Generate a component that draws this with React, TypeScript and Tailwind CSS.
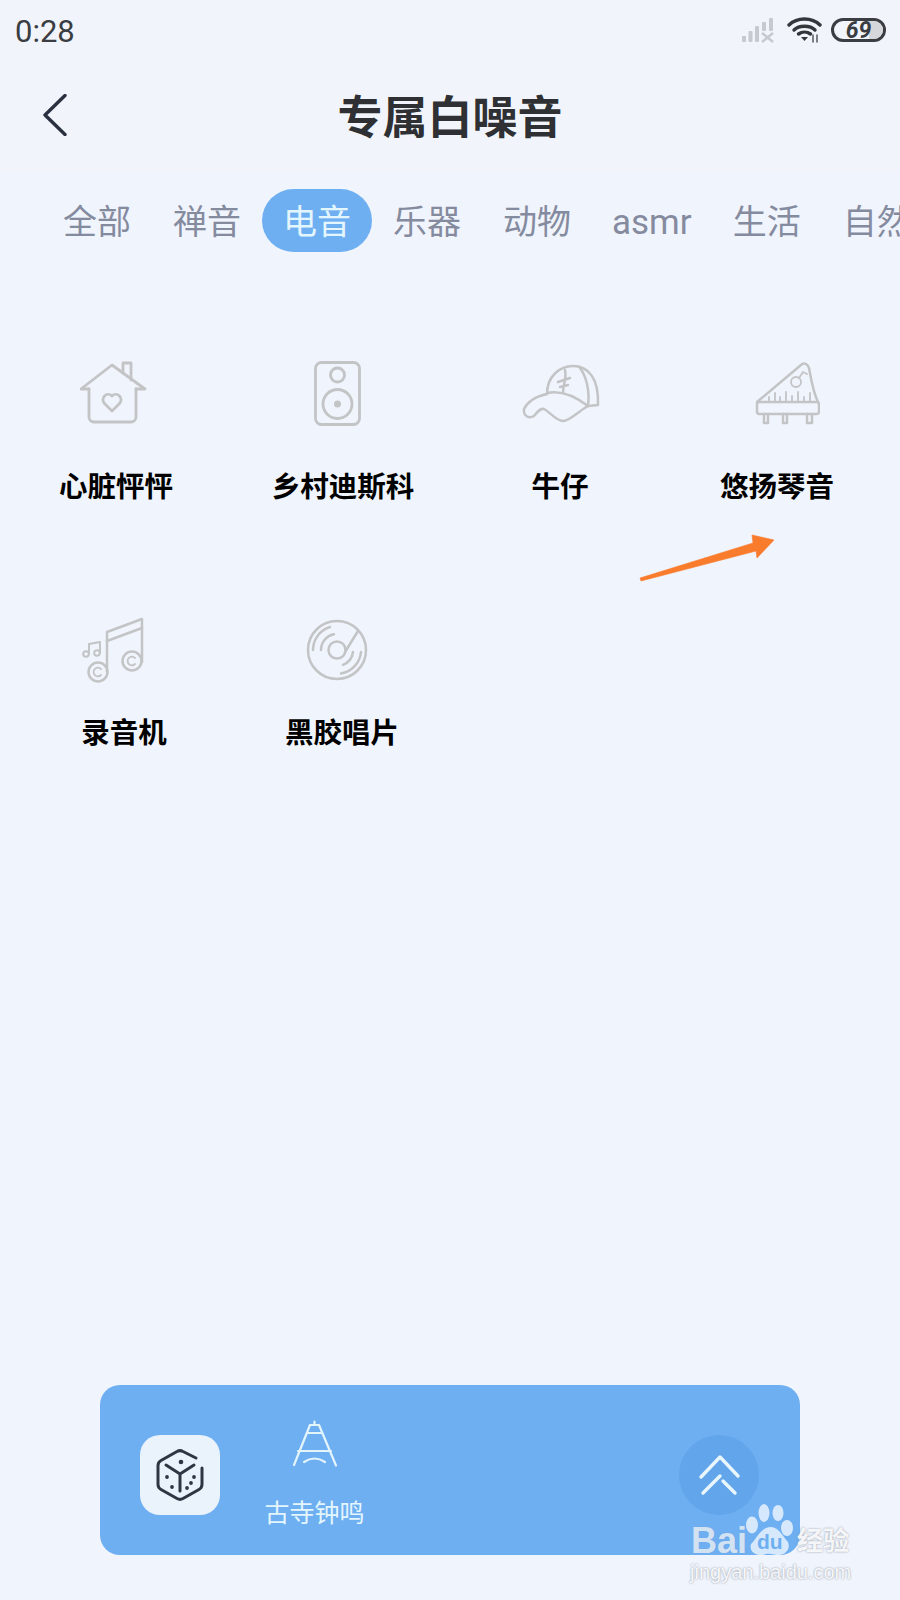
import React from 'react';

const CJK = 'font-["Roboto","Noto_Sans_CJK_SC",sans-serif]';

const tabs = ['全部', '禅音', '电音', '乐器', '动物', 'asmr', '生活', '自然'];

const HouseIcon = () => (
  <svg width="80" height="80" viewBox="0 0 80 80" fill="none" stroke="#c3c4c6" strokeWidth="2.800" strokeLinejoin="round" strokeLinecap="round">
    <path d="M1 35L32 11L65 35H56M1 35H9" />
    <path d="M43 19V9H51V26" />
    <path d="M9 35V63a5 5 0 0 0 5 5H51a5 5 0 0 0 5-5V35" />
    <path d="M32 57L24.500 49.500a5.300 5.300 0 0 1 7.500-7.500a5.300 5.300 0 0 1 7.500 7.500Z" />
  </svg>
);

const SpeakerIcon = () => (
  <svg width="80" height="80" viewBox="0 0 80 80" fill="none" stroke="#c3c4c6" strokeWidth="2.800">
    <rect x="15.500" y="8.500" width="44" height="62" rx="6" />
    <circle cx="37.500" cy="21" r="7" />
    <circle cx="37.500" cy="50" r="14.500" />
    <circle cx="37.500" cy="50" r="3.500" fill="#c3c4c6" stroke="none" />
  </svg>
);

const CapIcon = () => (
  <svg width="80" height="80" viewBox="0 0 80 80" fill="none" stroke="#c3c4c6" strokeWidth="2.500" strokeLinecap="round" strokeLinejoin="round">
    <path d="M27 40C27 22 40 12 53 12C68 12 79 24 78 51L68 52" />
    <path d="M27 40C18 42 8 47 4 55C3 62 9 65 14 62C17 58 20 54 24 55C30 58 36 67 43 67C50 67 60 56 68 52" />
    <path d="M27 39C40 36 55 42 68 52" />
    <path d="M60 14C66 22 70 36 68 52" />
    <path d="M45 16C47 24 43 30 43 39M38 28L50 24M40 33L48 31" />
  </svg>
);

const PianoIcon = () => (
  <svg width="80" height="80" viewBox="0 0 80 80" fill="none" stroke="#c3c4c6" strokeWidth="2.500" strokeLinecap="round" strokeLinejoin="round">
    <path d="M17 48L61 11C64 8 68 10 69 14C71 25 73 38 78 48" />
    <rect x="17" y="48" width="62" height="12" rx="2.500" />
    <path d="M24 60V69H28V60M43 60V69H47V60M67 60V69H72V60" />
    <path d="M29 48V43M35 48V39M40 48V43M46 48V38M52 48V42M58 48V38M64 48V43M70 48V39" strokeWidth="1.800" />
    <circle cx="56" cy="28" r="5" strokeWidth="1.800" />
    <path d="M59 24L63 18L67 20" strokeWidth="1.800" />
  </svg>
);

const NotesIcon = () => (
  <svg width="80" height="80" viewBox="0 0 80 80" fill="none" stroke="#c3c4c6" strokeWidth="2.500" strokeLinecap="round" strokeLinejoin="round">
    <path d="M27 62V22L62 9V52" />
    <path d="M27 31L62 18" />
    <circle cx="18" cy="62" r="9.500" />
    <path d="M21 59a4.300 4.300 0 1 0 0 6" strokeWidth="1.800" />
    <circle cx="52" cy="51" r="9.500" />
    <path d="M55 48a4.300 4.300 0 1 0 0 6" strokeWidth="1.800" />
    <circle cx="6" cy="44" r="2.800" strokeWidth="2" />
    <circle cx="17" cy="43" r="2.800" strokeWidth="2" />
    <path d="M9 44V34L20 32V43" strokeWidth="2" />
  </svg>
);

const RecordIcon = () => (
  <svg width="80" height="80" viewBox="0 0 80 80" fill="none" stroke="#c3c4c6" strokeWidth="2.500" strokeLinecap="round">
    <circle cx="37" cy="40" r="29" />
    <circle cx="37" cy="40" r="8.500" />
    <path d="M45 42L58 21" />
    <path d="M21 40a16 16 0 0 1 13-15.700" />
    <path d="M13 40a24 24 0 0 1 17-23" />
    <path d="M53 42a16 16 0 0 1-10 12.800" />
    <path d="M61 42a24 24 0 0 1-20 21.500" />
  </svg>
);

const DiceIcon = () => (
  <svg width="80" height="80" viewBox="0 0 80 80" fill="none" stroke="#2e3644" strokeWidth="3" strokeLinecap="round" strokeLinejoin="round">
    <path d="M56 23L43 16.500a6 6 0 0 0-6 0L21 25.500a6 6 0 0 0-3 5V49.500a6 6 0 0 0 3 5L37 63.500a6 6 0 0 0 6 0L59 54.500a6 6 0 0 0 3-5V33" />
    <path d="M26 30L40 39L54 30M40 39V56" />
    <g fill="#2e3644" stroke="none">
      <circle cx="41" cy="27" r="2.300" />
      <circle cx="27" cy="42" r="1.900" />
      <circle cx="32" cy="52" r="1.900" />
      <circle cx="54" cy="42" r="1.900" />
      <circle cx="51" cy="48" r="1.900" />
      <circle cx="47" cy="53" r="1.900" />
    </g>
  </svg>
);

const TowerIcon = () => (
  <svg width="44" height="47" viewBox="0 0 44 47" fill="none" stroke="#e4f4fb" strokeWidth="2.200" strokeLinecap="round" strokeLinejoin="round">
    <path d="M21.500 1.500V5M17 5H26M17 5L1 45M26 5L43 45.500" />
    <path d="M15 13H28M5 31H38" />
    <path d="M11 42Q21.500 35 32 42" />
  </svg>
);

const gridItems = [
  { name: '心脏怦怦', icon: <HouseIcon />, labelClass: 'pr-[8px]' },
  { name: '乡村迪斯科', icon: <SpeakerIcon />, labelClass: 'pl-[6px]' },
  { name: '牛仔', icon: <CapIcon />, labelClass: '' },
  { name: '悠扬琴音', icon: <PianoIcon />, labelClass: 'pr-[6px]' },
];

const secondRow = [
  { name: '录音机', icon: <NotesIcon />, labelClass: 'pl-[8px]' },
  { name: '黑胶唱片', icon: <RecordIcon />, labelClass: 'pl-[4px]' },
];

export default function App() {
  return (
    <div className={`relative flex h-[1600px] w-[900px] flex-col overflow-hidden bg-[#f0f4fc] ${CJK}`}>
      <div className="bg-[#f1f5fb]">
        {/* status bar */}
        <div className="flex h-[60px] items-center justify-between pl-[15px] pr-[14px]">
          <span className="pt-[2px] text-[31px] leading-none text-[#3a3d42]">0:28</span>
          <div className="flex items-center">
            <svg width="34" height="26" viewBox="0 0 34 26" fill="#c6c9ce">
              <rect x="1" y="19" width="4" height="6" rx="1" />
              <rect x="7.500" y="14" width="4" height="11" rx="1" />
              <rect x="14" y="9" width="4" height="16" rx="1" />
              <rect x="21" y="5" width="4" height="9" rx="1" />
              <rect x="28" y="1" width="4" height="13" rx="1" />
              <path d="M21 16L32 25M32 16L21 25" stroke="#c6c9ce" strokeWidth="2.500" />
            </svg>
            <svg className="ml-[12px]" width="36" height="26" viewBox="0 0 36 26" fill="none" stroke="#33363b" strokeWidth="3.400" strokeLinecap="round">
              <path d="M2 8C10 0 25 0 33 8" />
              <path d="M7 13C12 8 23 8 28 13" />
              <path d="M11.500 17C15 14.500 20 14.500 23.500 17" />
              <path d="M14 20H21L17.500 24Z" fill="#33363b" stroke="none" />
              <path d="M26 18V25M30 18V25" strokeWidth="1.500" stroke="#55585e" />
            </svg>
            <div className="relative ml-[8px] flex h-[24px] w-[55px] items-center justify-center overflow-hidden rounded-full border-[3px] border-[#3a3d42]">
              <div className="absolute inset-y-0 right-0 w-[14px] bg-[#d5d7da]" />
              <span className="relative text-[23px] font-bold italic leading-none text-[#3a3d42]">69</span>
            </div>
          </div>
        </div>

        {/* title bar */}
        <div className="relative flex h-[112px] items-center justify-center pt-[4px]">
          <svg className="absolute left-[43px] top-[34px]" width="24" height="42" viewBox="0 0 24 42" fill="none" stroke="#2a3040" strokeWidth="3.400" strokeLinecap="round" strokeLinejoin="round">
            <path d="M22 1.500L2 21L22 40.500" />
          </svg>
          <h1 className="text-[45px] font-bold leading-none text-[#2e3033]">专属白噪音</h1>
        </div>
      </div>

      {/* category tabs */}
      <div className="flex items-center overflow-hidden whitespace-nowrap pl-[42px] pt-[17px]">
        {tabs.map((tab) => (
          <span
            key={tab}
            className={
              tab === '电音'
                ? 'h-[63px] shrink-0 rounded-[32px] bg-[#6eaff2] px-[21px] text-[34px] leading-[67px] text-[#e4f6fd]'
                : tab === 'asmr'
                  ? 'h-[63px] shrink-0 px-[20px] text-[35px] leading-[67px] text-[#858b9f]'
                  : 'h-[63px] shrink-0 px-[21px] text-[34px] leading-[67px] text-[#858b9f]'
            }
          >
            {tab}
          </span>
        ))}
      </div>

      {/* sound grid */}
      <div className="mt-[102px] grid grid-cols-[repeat(4,220px)] px-[10px]">
        {gridItems.map((item) => (
          <div key={item.name} className="flex flex-col items-center">
            {item.icon}
            <span className={`mt-[33px] text-[28.5px] font-bold leading-[42px] text-black ${item.labelClass}`}>{item.name}</span>
          </div>
        ))}
      </div>
      <div className="mt-[101px] grid grid-cols-[repeat(4,220px)] px-[10px]">
        {secondRow.map((item) => (
          <div key={item.name} className="flex flex-col items-center">
            {item.icon}
            <span className={`mt-[23px] text-[28.5px] font-bold leading-[42px] text-black ${item.labelClass}`}>{item.name}</span>
          </div>
        ))}
      </div>

      {/* now playing card */}
      <div className="mx-[100px] mb-[45px] mt-auto flex h-[170px] items-start rounded-[20px] bg-[#6eaff2] pl-[40px] pr-[41px] pt-[35px]">
        <div className="mt-[15px] flex h-[80px] w-[80px] items-center justify-center rounded-[20px] bg-[#eaf3fb]">
          <DiceIcon />
        </div>
        <div className="ml-[46px] flex w-[97px] flex-col items-center">
          <TowerIcon />
          <span className="mt-[31px] whitespace-nowrap text-[25px] leading-[32px] text-[#e4f6fd]">古寺钟鸣</span>
        </div>
        <div className="ml-auto mt-[15px] flex h-[80px] w-[80px] items-center justify-center rounded-full bg-[#62a5ea]">
          <svg width="80" height="80" viewBox="0 0 80 80" fill="none" stroke="#e8f6fd" strokeWidth="3.400" strokeLinecap="round" strokeLinejoin="round">
            <path d="M22 42L41 22L59 41" />
            <path d="M24 58L41 41M44 46L56 58" />
          </svg>
        </div>
      </div>

      {/* hand-drawn arrow annotation */}
      <svg className="absolute left-[636px] top-[530px]" width="142" height="54" viewBox="0 0 142 54">
        <path d="M4 48L117 13L116 5L138 10L121 28L120 21L5 51Z" fill="#f97b2c" stroke="#f97b2c" strokeWidth="0.600" strokeLinejoin="round" />
      </svg>

      {/* site watermark */}
      <div className="absolute left-[690px] top-[1500px] h-[84px] w-[166px]">
        <span className="absolute left-[1px] top-[23px] font-['Liberation_Sans',sans-serif] text-[36px] font-bold leading-[36px] text-white/70 [text-shadow:0_0_1px_rgba(130,140,160,0.35)]">Bai</span>
        <svg className="absolute left-[52px] top-[1px]" width="54" height="56" viewBox="0 0 52 56" fill="#ffffff" fillOpacity="0.72">
          <ellipse cx="21" cy="12" rx="5.500" ry="9" />
          <ellipse cx="35" cy="12" rx="5.500" ry="8" />
          <ellipse cx="9" cy="24" rx="6" ry="8.500" />
          <ellipse cx="44" cy="27" rx="6" ry="8" />
          <path d="M28 26C36 26 40 36 45 41C48 48 42 54 36 54C31 54 26 51 20 54C12 55 6 50 8 43C14 37 18 26 28 26Z" />
        </svg>
        <span className="absolute left-[67px] top-[31px] font-['Liberation_Sans',sans-serif] text-[21px] font-bold leading-[21px] text-[#6eaff2]">du</span>
        <span className="absolute left-[107px] top-[27px] text-[26px] font-bold leading-[28px] text-white/90 [text-shadow:0_0_2px_rgba(110,120,140,0.8)]">经验</span>
        <span className="absolute left-0 top-[60px] whitespace-nowrap font-['Liberation_Sans',sans-serif] text-[20px] leading-[24px] text-white/90 [text-shadow:0_0_2px_rgba(100,110,130,0.8)]">jingyan.baidu.com</span>
      </div>
    </div>
  );
}
